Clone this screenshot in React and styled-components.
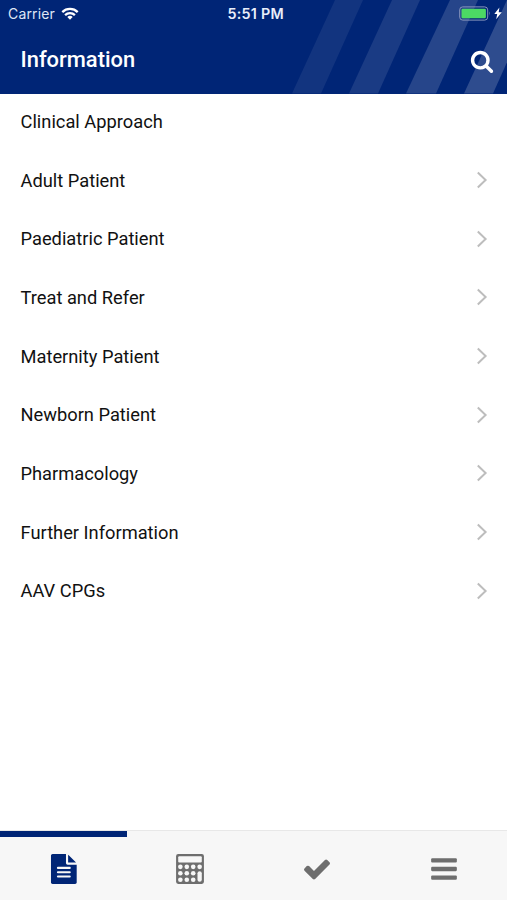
import React from 'react';
import styled, { createGlobalStyle } from 'styled-components';

const GlobalStyle = createGlobalStyle`
  * {
    box-sizing: border-box;
  }
  body {
    margin: 0;
    background: #fff;
    font-family: Roboto, 'Liberation Sans', sans-serif;
  }
`;

const Screen = styled.div`
  width: 507px;
  height: 900px;
  display: flex;
  flex-direction: column;
  overflow: hidden;
  background: #fff;
`;

const Header = styled.header`
  position: relative;
  flex: none;
  height: 93.5px;
  background: #002576;
  color: #fff;
`;

const Stripes = styled.svg`
  position: absolute;
  top: 0;
  right: 0;
`;

const StatusBar = styled.div`
  position: relative;
  display: grid;
  grid-template-columns: 1fr auto 1fr;
  align-items: center;
  height: 27px;
  padding: 0 5.5px 0 8px;
  font-family: Inter, 'Liberation Sans', sans-serif;
  font-size: 14px;
  line-height: 27px;
`;

const Carrier = styled.div`
  display: flex;
  align-items: center;
  gap: 6.5px;
  color: #dfe6f5;
  letter-spacing: 0.15px;
`;

const Clock = styled.div`
  padding-left: 2px;
  font-size: 14.3px;
  font-weight: 600;
  letter-spacing: 0.3px;
  color: #e9eefa;
`;

const Power = styled.div`
  display: flex;
  align-items: center;
  justify-content: flex-end;
  gap: 3px;
`;

const TitleBar = styled.div`
  position: relative;
  display: flex;
  align-items: center;
  justify-content: space-between;
  height: 66px;
  padding: 0 13px 0 20.5px;
`;

const Title = styled.h1`
  margin: 0;
  font-size: 21.9px;
  font-weight: 500;
  line-height: 64px;
`;

const SearchButton = styled.button`
  display: flex;
  margin-top: 2px;
  padding: 0;
  border: 0;
  background: none;
  color: #fff;
`;

const List = styled.ul`
  flex: 1;
  margin: 0;
  padding: 0;
  list-style: none;
`;

const Row = styled.li`
  display: flex;
  align-items: center;
  justify-content: space-between;
  height: 58.65px;
  padding: 0 19.5px 2.5px 20.5px;
  font-size: 18.3px;
  color: #111;
`;

const TabBar = styled.nav`
  flex: none;
  display: grid;
  grid-template-columns: repeat(4, 1fr);
  height: 70px;
  border-top: 1px solid #e8e8e8;
  background: #f7f7f7;
`;

const Tab = styled.button`
  display: flex;
  align-items: center;
  justify-content: center;
  padding: 7px 0 0;
  border: 0;
  background: none;
  color: ${(props) => (props.$active ? '#002576' : '#6e6e6e')};
  box-shadow: ${(props) => (props.$active ? 'inset 0 6px #002576' : 'none')};
`;

const Wifi = () => (
  <svg width='18' height='13' viewBox='0 0 18 13' fill='none' stroke='#fff' strokeWidth='2.3'>
    <path d='M1.3 5.1a11 11 0 0 1 15.4 0M4.1 8.1a7 7 0 0 1 9.800 0' />
    <path d='M9 12.700L6.300 10a3.900 3.900 0 0 1 5.400 0z' fill='#fff' stroke='none' />
  </svg>
);

const Battery = () => (
  <svg width='32' height='15' viewBox='0 0 32 15'>
    <rect x='0.7' y='0.9' width='28' height='13.200' rx='3' fill='none' stroke='#8996bd' />
    <rect x='2.500' y='2.700' width='24.400' height='9.600' rx='1.200' fill='#4cd964' />
    <path d='M30 5.300q1.600 2.200 0 4.400z' fill='#8996bd' />
  </svg>
);

const Bolt = () => (
  <svg width='8' height='13' viewBox='0 0 8 13'>
    <path d='M5.400 0.500L0.300 7h2.900L2.200 12.300 7.800 5.300H4.700z' fill='#fff' />
  </svg>
);

const Search = () => (
  <svg width='24' height='24' viewBox='0 0 1792 1792' fill='currentColor'>
    <path d='M1216 832q0-185-131.500-316.500t-316.500-131.500-316.500 131.500-131.500 316.500 131.500 316.500 316.500 131.500 316.500-131.500 131.500-316.500zm512 832q0 52-38 90t-90 38q-54 0-90-38l-343-342q-179 124-399 124-143 0-273.500-55.500t-225-150-150-225-55.500-273.500 55.500-273.500 150-225 225-150 273.500-55.500 273.500 55.500 225 150 150 225 55.500 273.500q0 220-124 399l343 343q37 37 37 90z' />
  </svg>
);

const Chevron = () => (
  <svg width='12' height='18' viewBox='0 0 12 18' fill='none' stroke='#bdbdbd' strokeWidth='2'>
    <path d='M1.800 1.500L9.600 9l-7.800 7.500' />
  </svg>
);

const FileText = () => (
  <svg width='30' height='30' viewBox='-50 0 1792 1792' fill='currentColor'>
    <path d='M1596 476q14 14 28 36h-472v-472q22 14 36 28zm-476 164h544v1056q0 40-28 68t-68 28h-1344q-40 0-68-28t-28-68v-1600q0-40 28-68t68-28h800v544q0 40 28 68t68 28z' />
    <path d='M544 832h704M544 1088h704M544 1344h704' stroke='#f7f7f7' strokeWidth='128' strokeLinecap='round' />
  </svg>
);

const keys = [
  [320, 768], [704, 768], [1088, 768], [1472, 768],
  [320, 1152], [704, 1152], [1088, 1152],
  [320, 1536], [704, 1536], [1088, 1536],
];

const Calculator = () => (
  <svg width='30' height='30' viewBox='0 0 1792 1792'>
    <rect x='64' width='1664' height='1792' rx='128' fill='currentColor' />
    <g fill='#f7f7f7'>
      <rect x='192' y='128' width='1408' height='384' rx='64' />
      <rect x='1344' y='1024' width='256' height='640' rx='128' />
      {keys.map(([x, y]) => (
        <circle key={`${x}-${y}`} cx={x} cy={y} r='138' />
      ))}
    </g>
  </svg>
);

const Check = () => (
  <svg width='30' height='30' viewBox='0 0 1792 1792' fill='currentColor'>
    <path d='M1671 566q0 40-28 68l-724 724-136 136q-28 28-68 28t-68-28l-136-136-362-362q-28-28-28-68t28-68l136-136q28-28 68-28t68 28l294 295 656-657q28-28 68-28t68 28l136 136q28 28 28 68z' />
  </svg>
);

const Bars = () => (
  <svg width='30' height='30' viewBox='0 0 1792 1792' fill='currentColor'>
    <rect x='128' y='256' width='1536' height='256' rx='64' />
    <rect x='128' y='768' width='1536' height='256' rx='64' />
    <rect x='128' y='1280' width='1536' height='256' rx='64' />
  </svg>
);

const items = [
  { name: 'Clinical Approach' },
  { name: 'Adult Patient', more: true },
  { name: 'Paediatric Patient', more: true },
  { name: 'Treat and Refer', more: true },
  { name: 'Maternity Patient', more: true },
  { name: 'Newborn Patient', more: true },
  { name: 'Pharmacology', more: true },
  { name: 'Further Information', more: true },
  { name: 'AAV CPGs', more: true },
];

const App = () => {
  return (
    <Screen>
      <GlobalStyle />
      <Header>
        <Stripes width='220' height='93.5' viewBox='0 0 220 93.5' fill='#fff'>
          <path d='M48 0h28L34 93.500H5z' opacity='0.07' />
          <path d='M105 0h28L91 93.500H62z' opacity='0.1' />
          <path d='M163 0h28L149 93.500H119z' opacity='0.15' />
          <path d='M220 0h28L206 93.500H177z' opacity='0.18' />
        </Stripes>
        <StatusBar>
          <Carrier>
            Carrier
            <Wifi />
          </Carrier>
          <Clock>5:51 PM</Clock>
          <Power>
            <Battery />
            <Bolt />
          </Power>
        </StatusBar>
        <TitleBar>
          <Title>Information</Title>
          <SearchButton aria-label='Search'>
            <Search />
          </SearchButton>
        </TitleBar>
      </Header>
      <List>
        {items.map((item) => (
          <Row key={item.name}>
            {item.name}
            {item.more && <Chevron />}
          </Row>
        ))}
      </List>
      <TabBar>
        <Tab $active aria-label='Information'>
          <FileText />
        </Tab>
        <Tab aria-label='Calculators'>
          <Calculator />
        </Tab>
        <Tab aria-label='Checklists'>
          <Check />
        </Tab>
        <Tab aria-label='Menu'>
          <Bars />
        </Tab>
      </TabBar>
    </Screen>
  );
};

export default App;
